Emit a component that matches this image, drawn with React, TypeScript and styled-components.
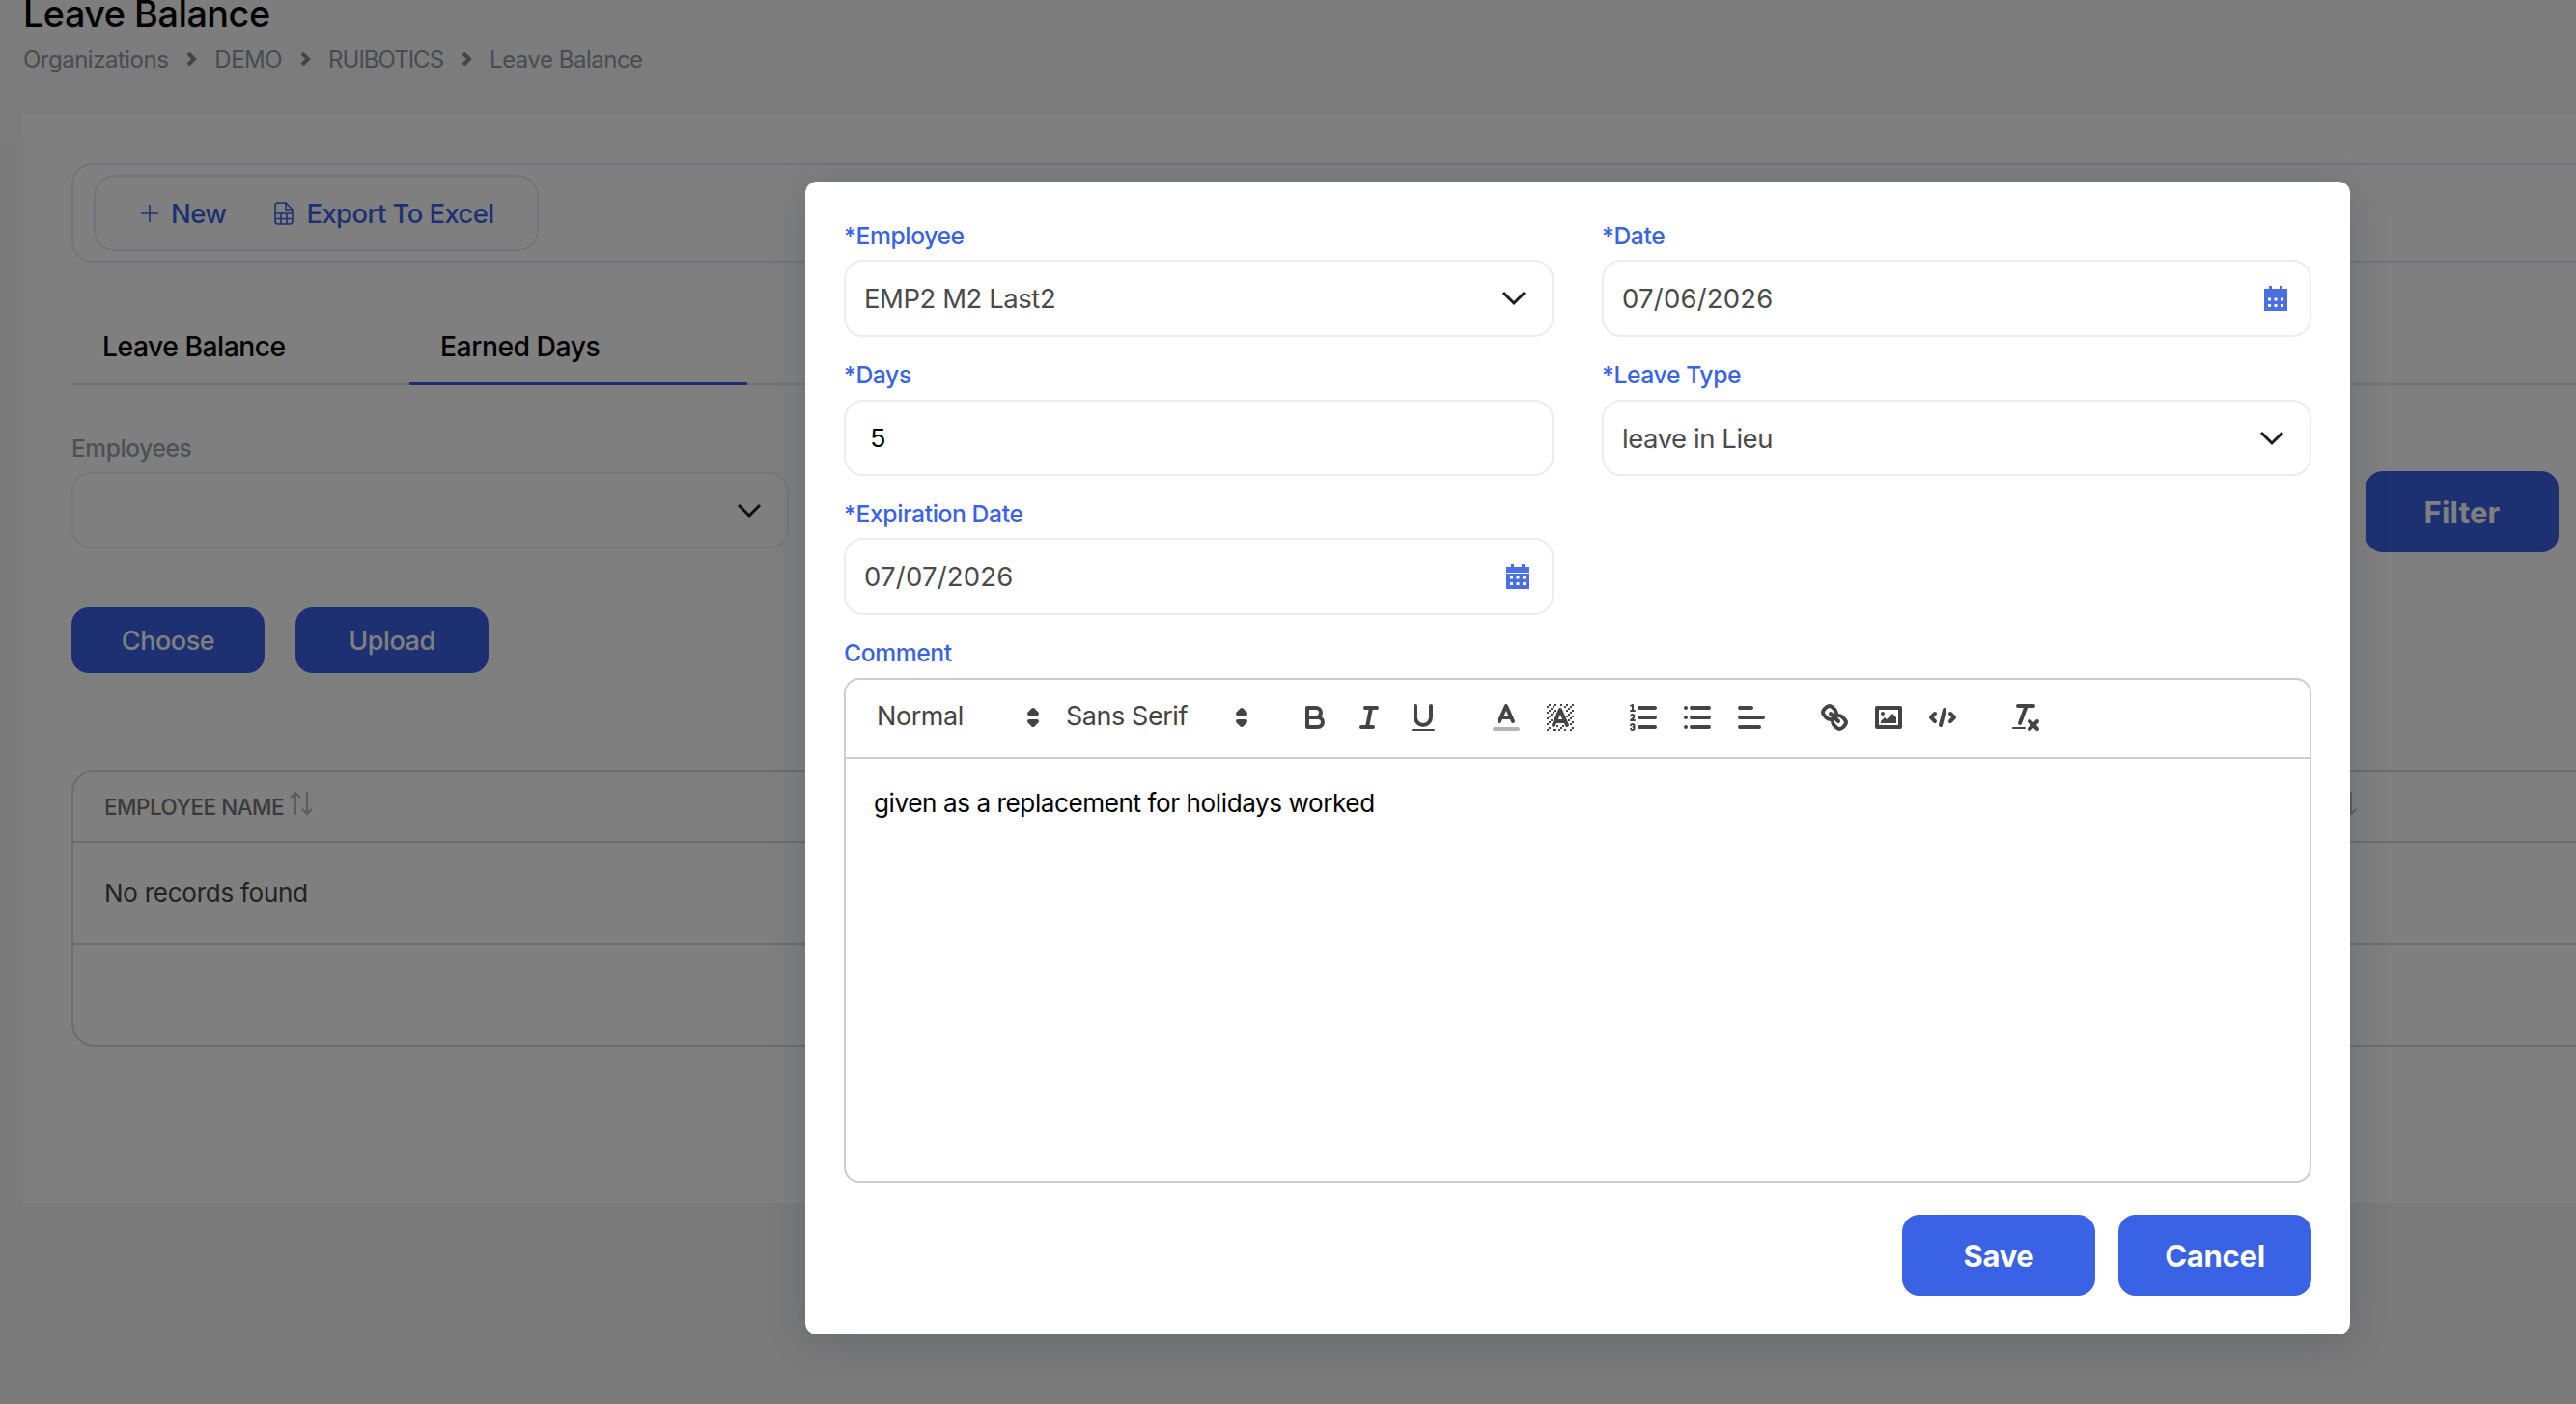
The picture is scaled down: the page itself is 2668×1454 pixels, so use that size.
import React from "react";
import styled, { createGlobalStyle } from "styled-components";

const BLUE = "#3a62e5";
const SANS = `Inter, "Noto Sans", sans-serif`;

const GlobalStyle = createGlobalStyle`
  html, body {
    margin: 0;
    padding: 0;
    width: 2668px;
    height: 1454px;
    overflow: hidden;
    font-family: ${SANS};
  }
  * { box-sizing: border-box; }
`;

const Screen = styled.div`
  position: relative;
  width: 2668px;
  height: 1454px;
  overflow: hidden;
  background: linear-gradient(#fbfbfb 0, #f4f4f4 300px);
`;

// page is scrolled a little in the screenshot, title is clipped at the top
const PageHeader = styled.header`
  height: 119px;
  margin-top: -9px;
  padding: 0 0 0 24px;
  margin-bottom: 9px;
`;

const Title = styled.h1`
  margin: 0;
  font-size: 37.8px;
  line-height: 46px;
  font-weight: 500;
  letter-spacing: -0.5px;
  color: #000;
`;

const Crumbs = styled.nav`
  display: flex;
  align-items: center;
  margin-top: 8px;
  height: 32px;
  font-size: 24px;
  letter-spacing: -0.5px;
  color: #93979f;
`;

const CrumbTight = styled.span`
  letter-spacing: -1px;
`;

const CrumbArrow = styled.svg`
  width: 12px;
  height: 14px;
  margin: 0 18px;
  fill: none;
  stroke: #85888f;
  stroke-width: 4;
`;

const Card = styled.main`
  width: 2720px;
  height: 1127px;
  margin-left: 24px;
  padding: 50px 0 0 50px;
  background: #fff;
`;

const ToolbarOuter = styled.div`
  display: flex;
  align-items: center;
  height: 103px;
  padding-left: 21px;
  border: 2px solid #e6e8ef;
  border-radius: 22px;
`;

const ToolbarInner = styled.div`
  display: flex;
  align-items: center;
  width: 461px;
  height: 79px;
  padding-left: 46px;
  border: 2px solid #e6e8ef;
  border-radius: 22px;
`;

const ToolAction = styled.span<{ $gap?: number }>`
  display: flex;
  align-items: center;
  margin-left: ${(p) => p.$gap ?? 0}px;
  font-size: 27.4px;
  font-weight: 500;
  letter-spacing: -0.55px;
  color: ${BLUE};
`;

const PlusIcon = styled.svg`
  width: 20px;
  height: 20px;
  margin-right: 12px;
  stroke: ${BLUE};
  stroke-width: 1.6;
`;

const FileIcon = styled.svg`
  width: 20px;
  height: 24px;
  margin-right: 13px;
  fill: none;
  stroke: ${BLUE};
  stroke-width: 1.6;
`;

const TabBar = styled.div`
  display: flex;
  height: 80px;
  margin-top: 47px;
  border-bottom: 2px solid #e6e6ea;
`;

const Tab = styled.div<{ $active?: boolean }>`
  width: 350px;
  height: 80px;
  padding: 3px 0 0 32px;
  display: flex;
  align-items: center;
  font-size: 28.3px;
  font-weight: 500;
  letter-spacing: -0.5px;
  color: #000;
  border-bottom: 3px solid ${(p) => (p.$active ? BLUE : "transparent")};
`;

const FilterRow = styled.div`
  display: flex;
  justify-content: space-between;
  width: 2576px;
  margin-top: 50px;
`;

const FilterField = styled.div`
  width: 743px;
`;

const MutedLabel = styled.div`
  height: 30px;
  line-height: 30px;
  margin-bottom: 10px;
  font-size: 24.5px;
  font-weight: 500;
  letter-spacing: -0.4px;
  color: #9aa0aa;
`;

const Select = styled.div`
  display: flex;
  align-items: center;
  justify-content: space-between;
  height: 79px;
  padding: 0 25px 0 20px;
  border: 2px solid #ececf0;
  border-radius: 20px;
  background: #fff;
`;

const Chevron = styled.svg`
  width: 28px;
  height: 16px;
  fill: none;
  stroke: #1c1c1c;
  stroke-width: 3;
`;

const Button = styled.button<{ $w: number; $h: number }>`
  width: ${(p) => p.$w}px;
  height: ${(p) => p.$h}px;
  padding: 0;
  border: 0;
  border-radius: 18px;
  background: ${BLUE};
  color: #fff;
  font-family: ${SANS};
`;

const FilterButton = styled(Button)`
  margin-top: 39px;
  font-size: 31px;
  font-weight: 700;
  letter-spacing: 0.2px;
`;

const UploadRow = styled.div`
  display: flex;
  gap: 32px;
  margin-top: 57px;
`;

const UploadButton = styled(Button)`
  font-size: 27px;
  font-weight: 500;
  letter-spacing: -0.45px;
`;

const Table = styled.section`
  height: 287px;
  margin-top: 100px;
  border: 2px solid #d9d9d9;
  border-right: 0;
  border-radius: 24px 0 0 24px;
`;

const TableHead = styled.div`
  display: grid;
  grid-template-columns: 2303px auto;
  align-items: center;
  height: 74px;
  padding: 0 0 0 32px;
  border-bottom: 2px solid #d9d9d9;
`;

const HeadCell = styled.div`
  display: flex;
  align-items: center;
  font-size: 22.4px;
  font-weight: 500;
  letter-spacing: -0.45px;
  color: #757579;
`;

const SortIcon = styled.svg`
  width: 26px;
  height: 26px;
  margin: -6px 0 0 5px;
  fill: none;
  stroke: #b8b8b8;
  stroke-width: 2;
`;

const EmptyRow = styled.div`
  display: flex;
  align-items: center;
  height: 106px;
  padding: 0 0 2px 32px;
  border-bottom: 2px solid #d9d9d9;
  font-size: 26px;
  letter-spacing: -0.25px;
  color: #444;
`;

const Backdrop = styled.div`
  position: absolute;
  inset: 0;
  background: rgba(0, 0, 0, 0.5);
`;

const Modal = styled.div`
  position: absolute;
  left: 834px;
  top: 188px;
  width: 1600px;
  height: 1194px;
  padding: 41px 40px 40px;
  background: #fff;
  border-radius: 12px;
  box-shadow: 0 8px 40px rgba(20, 25, 50, 0.16);
`;

const FormGrid = styled.div`
  display: grid;
  grid-template-columns: 735px 735px;
  column-gap: 50px;
  row-gap: 24px;
`;

const Label = styled.label<{ $gap?: number }>`
  display: block;
  height: 30px;
  line-height: 30px;
  margin-bottom: ${(p) => p.$gap ?? 10}px;
  font-size: 24.7px;
  font-weight: 500;
  letter-spacing: -0.4px;
  color: ${BLUE};
`;

const InputBox = styled.div<{ $h?: number }>`
  display: flex;
  align-items: center;
  justify-content: space-between;
  height: ${(p) => p.$h ?? 80}px;
  padding: 0 25px 0 19px;
  border: 2px solid #ececf0;
  border-radius: 20px;
  font-size: 27.5px;
  letter-spacing: -0.45px;
  color: #4a4a4a;
`;

const DateBox = styled(InputBox)`
  letter-spacing: 0.2px;
`;

const NumberBox = styled(InputBox)`
  padding: 2px 25px 0 26px;
  font-family: "Liberation Sans", Arial, sans-serif;
  font-size: 27px;
  letter-spacing: 0;
  color: #000;
`;

const CalendarIcon = styled.svg`
  width: 24px;
  height: 26px;
  margin-right: -2px;
  fill: #4a6fe3;
`;

const CommentBlock = styled.div`
  margin-top: 24px;
`;

const Editor = styled.div`
  height: 523px;
  border: 2px solid #ccc;
  border-radius: 16px;
`;

const EditorToolbar = styled.div`
  display: flex;
  align-items: center;
  gap: 30px;
  height: 82px;
  padding: 0 16px 2px;
  border-bottom: 2px solid #ccc;
`;

const Formats = styled.div`
  display: flex;
`;

const Picker = styled.div<{ $w: number }>`
  display: flex;
  align-items: center;
  justify-content: space-between;
  width: ${(p) => p.$w}px;
  height: 48px;
  padding-left: 16px;
  font-size: 27px;
  letter-spacing: -0.45px;
  color: #444;
`;

const PickerLabel = styled.span`
  margin-top: -3px;
`;

const QuillIcon = styled.svg`
  width: 36px;
  height: 36px;
  fill: none;
  stroke: #444;
  stroke-width: 2;
  stroke-linecap: round;
  stroke-linejoin: round;
  stroke-miterlimit: 10;
  .fill {
    fill: #444;
    stroke: none;
  }
  .thin {
    stroke-width: 1;
  }
  .label {
    opacity: 0.4;
  }
`;

const ToolButton = styled.div`
  display: flex;
  align-items: center;
  justify-content: center;
  width: 56px;
  height: 48px;
`;

const EditorBody = styled.div`
  padding: 25px 29px;
  font-size: 26.1px;
  line-height: 42px;
  letter-spacing: -0.42px;
  color: #000;
`;

const ModalActions = styled.div`
  display: flex;
  justify-content: flex-end;
  gap: 24px;
  margin-top: 33px;
`;

const ActionButton = styled(Button)`
  font-size: 31px;
  font-weight: 700;
  letter-spacing: -0.3px;
`;

const ChevronDown = () => (
  <Chevron viewBox="0 0 28 16">
    <path d="M3 2l11 11L25 2" />
  </Chevron>
);

const Calendar = () => (
  <CalendarIcon viewBox="0 0 24 26">
    <rect x="5" y="0" width="3" height="5" />
    <rect x="16" y="0" width="3" height="5" />
    <path
      fillRule="evenodd"
      d="M0 3h24v6H0zM0 10h24v16H0zM4 12.5v3h3v-3zM10.5 12.5v3h3v-3zM17 12.5v3h3v-3zM4 19v3h3v-3zM10.5 19v3h3v-3zM17 19v3h3v-3z"
    />
  </CalendarIcon>
);

const Sort = () => (
  <SortIcon viewBox="0 0 26 26">
    <path d="M7 25V2M2 7l5-5 5 5" />
    <path d="M19 1v23M14 19l5 5 5-5" />
  </SortIcon>
);

const Crumb = () => (
  <CrumbArrow viewBox="0 0 12 14">
    <path d="M3 1l6 6-6 6" />
  </CrumbArrow>
);

const PickerArrows = () => (
  <QuillIcon viewBox="0 0 18 18">
    <polygon points="7 11 9 13 11 11 7 11" />
    <polygon points="7 7 9 5 11 7 7 7" />
  </QuillIcon>
);

// dashed squares of the background colour icon
const HATCH = [
  [4, 4], [2, 6], [3, 5], [4, 7], [2, 12], [2, 9], [2, 15], [3, 8], [12, 2], [11, 3],
  [2, 3], [6, 2], [3, 2], [5, 3], [9, 2], [15, 14], [13, 7], [15, 5], [14, 6], [15, 8],
  [14, 9], [14, 3], [15, 2], [12, 5], [13, 4], [9, 14], [8, 15], [5, 15], [11, 15], [14, 15], [15, 11],
  [5, 6], [3, 11], [6, 5], [4, 10], [7, 13], [3, 14], [6, 15], [10, 13], [14, 12], [13, 10], [12, 8],
];

const TOOL_GROUPS: React.ReactNode[][] = [
  [
    <>
      <path d="M5,4H9.5A2.5,2.5,0,0,1,12,6.5v0A2.5,2.5,0,0,1,9.5,9H5A0,0,0,0,1,5,9V4A0,0,0,0,1,5,4Z" />
      <path d="M5,9h5.5A2.5,2.5,0,0,1,13,11.5v0A2.5,2.5,0,0,1,10.5,14H5a0,0,0,0,1,0,0V9A0,0,0,0,1,5,9Z" />
    </>,
    <>
      <line x1="7" x2="13" y1="4" y2="4" />
      <line x1="5" x2="11" y1="14" y2="14" />
      <line x1="8" x2="10" y1="14" y2="4" />
    </>,
    <>
      <path d="M5,3V9a4.012,4.012,0,0,0,4,4H9a4.012,4.012,0,0,0,4-4V3" />
      <rect className="fill" height="1" rx="0.5" ry="0.5" width="12" x="3" y="15" />
    </>,
  ],
  [
    <>
      <line className="label" x1="3" x2="15" y1="15" y2="15" />
      <polyline points="5.5 11 9 3 12.5 11" />
      <line x1="11.63" x2="6.38" y1="9" y2="9" />
    </>,
    <>
      {HATCH.map(([x, y]) => (
        <rect key={`${x}-${y}`} className="fill" width="1" height="1" x={x} y={y} />
      ))}
      <polyline points="5.5 13 9 5 12.5 13" />
      <line x1="11.63" x2="6.38" y1="11" y2="11" />
    </>,
  ],
  [
    <>
      <line x1="7" x2="15" y1="4" y2="4" />
      <line x1="7" x2="15" y1="9" y2="9" />
      <line x1="7" x2="15" y1="14" y2="14" />
      <line className="thin" x1="2.5" x2="4.5" y1="5.5" y2="5.5" />
      <path className="fill" d="M3.5,6A0.5,0.5,0,0,1,3,5.5V3.085l-0.276.138A0.5,0.5,0,0,1,2.053,3c-0.124-.247-0.023-0.324.224-0.447l1-.5A0.5,0.5,0,0,1,4,2.5v3A0.5,0.5,0,0,1,3.5,6Z" />
      <path className="thin" d="M4.5,10.5h-2c0-.234,1.85-1.076,1.85-2.234A0.959,0.959,0,0,0,2.5,8.156" />
      <path className="thin" d="M2.5,14.846a0.959,0.959,0,0,0,1.85-.109A0.7,0.7,0,0,0,3.75,14a0.688,0.688,0,0,0,.6-0.736,0.959,0.959,0,0,0-1.85-.109" />
    </>,
    <>
      <line x1="6" x2="15" y1="4" y2="4" />
      <line x1="6" x2="15" y1="9" y2="9" />
      <line x1="6" x2="15" y1="14" y2="14" />
      <line x1="3" x2="3" y1="4" y2="4" />
      <line x1="3" x2="3" y1="9" y2="9" />
      <line x1="3" x2="3" y1="14" y2="14" />
    </>,
    <>
      <line x1="3" x2="15" y1="9" y2="9" />
      <line x1="3" x2="13" y1="14" y2="14" />
      <line x1="3" x2="9" y1="4" y2="4" />
    </>,
  ],
  [
    <>
      <line x1="7" x2="11" y1="7" y2="11" />
      <path d="M8.9,4.577a3.476,3.476,0,0,1,.36,4.679A3.476,3.476,0,0,1,4.577,8.9C3.185,7.5,2.035,6.4,4.217,4.217S7.5,3.185,8.9,4.577Z" />
      <path d="M13.423,9.1a3.476,3.476,0,0,0-4.679-.36,3.476,3.476,0,0,0,.36,4.679c1.392,1.392,2.5,2.542,4.679.36S14.815,10.5,13.423,9.1Z" />
    </>,
    <>
      <rect height="10" width="12" x="3" y="4" />
      <circle className="fill" cx="6" cy="7" r="1" />
      <polyline className="fill" points="5 12 5 11 7 9 8 10 11 7 13 9 13 12 5 12" />
    </>,
    <>
      <polyline points="5 7 3 9 5 11" />
      <polyline points="13 7 15 9 13 11" />
      <line x1="10" x2="8" y1="5" y2="13" />
    </>,
  ],
  [
    <>
      <line x1="5" x2="13" y1="3" y2="3" />
      <line x1="6" x2="9.35" y1="12" y2="3" />
      <line x1="11" x2="15" y1="11" y2="15" />
      <line x1="15" x2="11" y1="11" y2="15" />
      <rect className="fill" height="1" rx="0.5" ry="0.5" width="7" x="2" y="14" />
    </>,
  ],
];

export default function App() {
  return (
    <Screen>
      <GlobalStyle />
      <PageHeader>
        <Title>Leave Balance</Title>
        <Crumbs>
          Organizations
          <Crumb />
          DEMO
          <Crumb />
          <CrumbTight>RUIBOTICS</CrumbTight>
          <Crumb />
          Leave Balance
        </Crumbs>
      </PageHeader>

      <Card>
        <ToolbarOuter>
          <ToolbarInner>
            <ToolAction>
              <PlusIcon viewBox="0 0 20 20">
                <path d="M10 1v18M1 10h18" />
              </PlusIcon>
              New
            </ToolAction>
            <ToolAction $gap={50}>
              <FileIcon viewBox="0 0 20 24">
                <path d="M4 1h8l7 7v12a3 3 0 0 1-3 3H4a3 3 0 0 1-3-3V4a3 3 0 0 1 3-3z" />
                <path d="M12 1v7h7M1 12h18M1 17.500h18M7 12v11M13 12v11" />
              </FileIcon>
              Export To Excel
            </ToolAction>
          </ToolbarInner>
        </ToolbarOuter>

        <TabBar>
          <Tab>Leave Balance</Tab>
          <Tab $active>Earned Days</Tab>
        </TabBar>

        <FilterRow>
          <FilterField>
            <MutedLabel>Employees</MutedLabel>
            <Select>
              <span />
              <ChevronDown />
            </Select>
          </FilterField>
          <FilterButton $w={200} $h={84}>Filter</FilterButton>
        </FilterRow>

        <UploadRow>
          <UploadButton $w={200} $h={68}>Choose</UploadButton>
          <UploadButton $w={200} $h={68}>Upload</UploadButton>
        </UploadRow>

        <Table>
          <TableHead>
            <HeadCell>
              EMPLOYEE NAME
              <Sort />
            </HeadCell>
            <Sort />
          </TableHead>
          <EmptyRow>No records found</EmptyRow>
        </Table>
      </Card>

      <Backdrop />

      <Modal>
        <FormGrid>
          <div>
            <Label>*Employee</Label>
            <InputBox>
              EMP2 M2 Last2
              <ChevronDown />
            </InputBox>
          </div>
          <div>
            <Label>*Date</Label>
            <DateBox>
              07/06/2026
              <Calendar />
            </DateBox>
          </div>
          <div>
            <Label $gap={11}>*Days</Label>
            <NumberBox $h={79}>5</NumberBox>
          </div>
          <div>
            <Label $gap={11}>*Leave Type</Label>
            <InputBox $h={79}>
              leave in Lieu
              <ChevronDown />
            </InputBox>
          </div>
          <div>
            <Label>*Expiration Date</Label>
            <DateBox>
              07/07/2026
              <Calendar />
            </DateBox>
          </div>
        </FormGrid>

        <CommentBlock>
          <Label $gap={11}>Comment</Label>
          <Editor>
            <EditorToolbar>
              <Formats>
                <Picker $w={196}>
                  <PickerLabel>Normal</PickerLabel>
                  <PickerArrows />
                </Picker>
                <Picker $w={216}>
                  <PickerLabel>Sans Serif</PickerLabel>
                  <PickerArrows />
                </Picker>
              </Formats>
              {TOOL_GROUPS.map((group, i) => (
                <Formats key={i}>
                  {group.map((icon, j) => (
                    <ToolButton key={j}>
                      <QuillIcon viewBox="0 0 18 18">{icon}</QuillIcon>
                    </ToolButton>
                  ))}
                </Formats>
              ))}
            </EditorToolbar>
            <EditorBody>given as a replacement for holidays worked</EditorBody>
          </Editor>
        </CommentBlock>

        <ModalActions>
          <ActionButton $w={200} $h={84}>Save</ActionButton>
          <ActionButton $w={200} $h={84}>Cancel</ActionButton>
        </ModalActions>
      </Modal>
    </Screen>
  );
}
